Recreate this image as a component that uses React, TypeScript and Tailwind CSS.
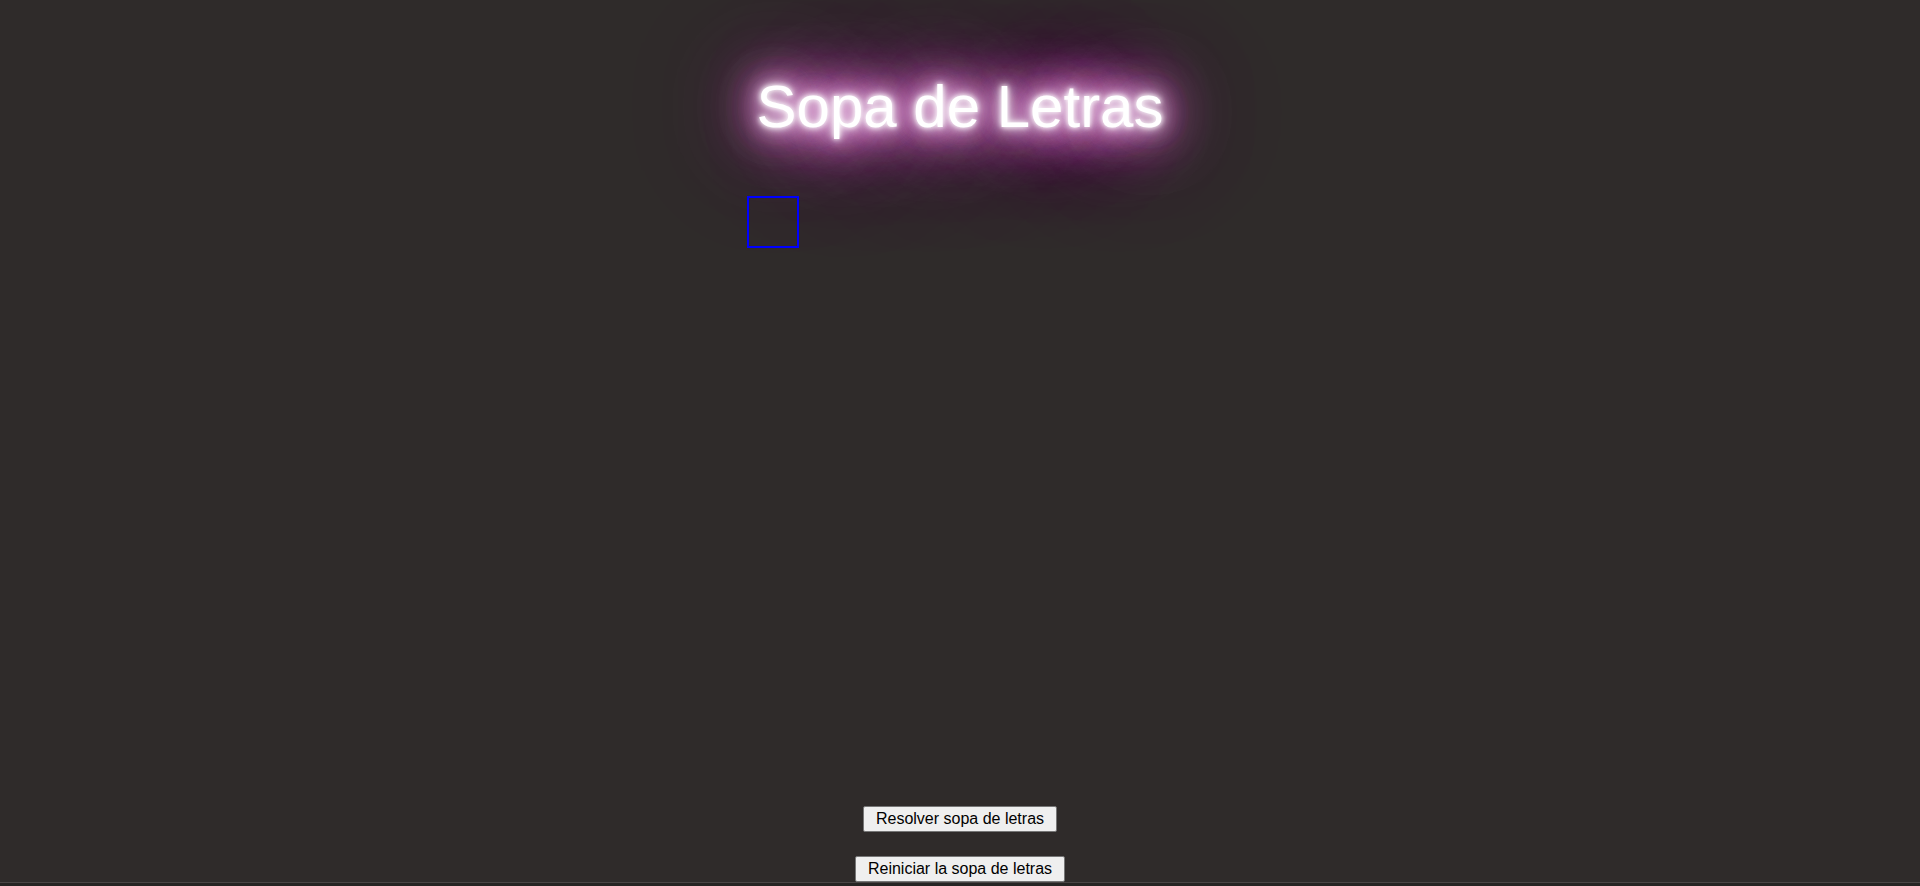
import React from "react"

const App: React.FC = () => (
  <div className="h-[886px] overflow-hidden bg-[#2f2b2a] font-['Liberation_Sans',Arial,sans-serif]">
    <div className="h-[882px] flex flex-col items-center">
      <h1 className="mt-[72px] text-[60px] leading-[69px] text-white [text-shadow:0_0_5px_#fff,0_0_10px_#fff,0_0_20px_#fff,0_0_30px_#f0a0e8,0_0_40px_#e070d0,0_0_45px_#e070d0,0_0_55px_#e070d0,0_0_65px_#e070d0,0_0_75px_#d862c8,0_0_100px_#c85cc0,0_0_140px_#b858b8]">
        Sopa de Letras
      </h1>
      <div className="w-[426px] mt-[55px]">
        <div className="w-[52px] h-[52px] border-2 border-[#0000ff]" />
      </div>
      <div className="flex-1" />
      <div className="flex flex-col items-center gap-6">
        <button className="h-[26px] px-3 text-base leading-none text-black bg-[#efefef] border border-[#767676] rounded-[2px]">
          Resolver sopa de letras
        </button>
        <button className="h-[26px] px-3 text-base leading-none text-black bg-[#efefef] border border-[#767676] rounded-[2px]">
          Reiniciar la sopa de letras
        </button>
      </div>
    </div>
    <div className="h-[4px] border-t border-[#4a4545] bg-[#262423]" />
  </div>
)

export default App
